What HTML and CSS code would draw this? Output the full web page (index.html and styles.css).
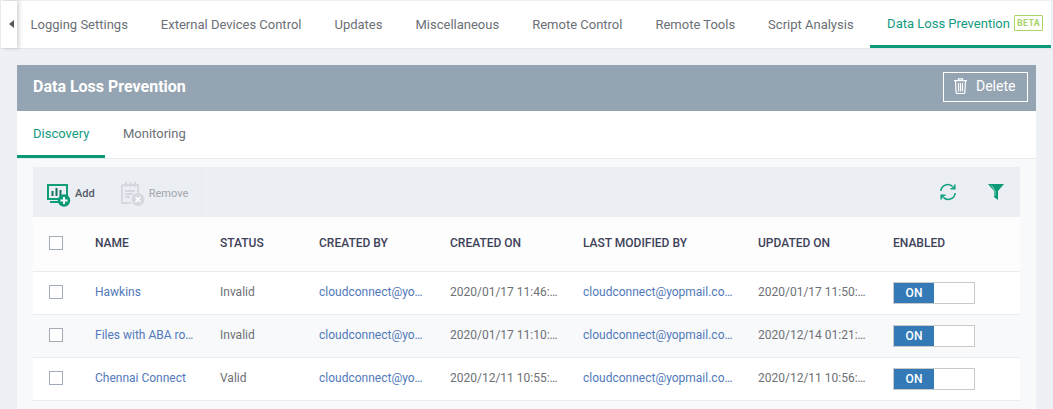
FILE: index.html
```html
<!DOCTYPE html>
<html lang="en">
<head>
<meta charset="utf-8">
<title>Data Loss Prevention</title>
<link rel="stylesheet" href="styles.css">
</head>
<body>
<div class="tabs">
  <div class="tabs-back"><span class="back-arrow"></span></div>
  <a class="tab">Logging Settings</a>
  <a class="tab">External Devices Control</a>
  <a class="tab">Updates</a>
  <a class="tab">Miscellaneous</a>
  <a class="tab">Remote Control</a>
  <a class="tab">Remote Tools</a>
  <a class="tab">Script Analysis</a>
  <a class="tab tab-active">Data Loss Prevention<span class="beta">BETA</span></a>
</div>
<main class="panel">
  <header class="panel-head">
    <h1 class="panel-title">Data Loss Prevention</h1>
    <button class="delete-btn">
      <svg class="trash" width="13" height="16" viewBox="0 0 13 16" fill="none" stroke="#fff" stroke-width="1.2"><path d="M0 2.600h13M4.500 2.600V.8h4v1.800M1.500 2.600l.6 11.600c0 .8.500 1.300 1.200 1.300h6.400c.7 0 1.200-.5 1.200-1.300l.6-11.600M4.500 5v8.500M6.500 5v8.500M8.500 5v8.500"/></svg>
      Delete
    </button>
  </header>
  <nav class="subtabs">
    <a class="subtab subtab-active">Discovery</a>
    <a class="subtab">Monitoring</a>
  </nav>
  <section class="content">
    <div class="toolbar">
      <button class="tool">
        <svg class="icon-add" width="24" height="23" viewBox="0 0 24 23" fill="none">
          <rect x="1" y="1" width="19" height="14" stroke="#0f9d7a" stroke-width="2"/>
          <path d="M5.500 12V7M9.500 12V4M13.500 12V6" stroke="#17735f" stroke-width="2"/>
          <path d="M3 18h10" stroke="#0f9d7a" stroke-width="2"/>
          <circle cx="17" cy="16.500" r="6.200" fill="#0a9a78"/>
          <path d="M13.500 16.500h7M17 13v7" stroke="#fff" stroke-width="2"/>
        </svg>
        <span>Add</span>
      </button>
      <button class="tool tool-off">
        <svg class="icon-remove" width="25" height="24" viewBox="0 0 25 24" fill="none">
          <path d="M2 3h16v9M2 3v18h9" stroke="#d5d8de" stroke-width="2"/>
          <path d="M6 0v5M10.500 0v5M15 0v5M5 9h10M5 12h8M5 15h5" stroke="#d5d8de" stroke-width="2"/>
          <circle cx="18" cy="17.500" r="6.500" fill="#d5d8de"/>
          <path d="M15.500 15l5 5M20.500 15l-5 5" stroke="#fff" stroke-width="1.600"/>
        </svg>
        <span>Remove</span>
      </button>
      <div class="tool-right">
        <svg class="refresh" width="18" height="18" viewBox="0 0 18 18" fill="none" stroke="#12a07e" stroke-width="1.500">
          <path d="M1.800 8a7 7 0 0 1 12.200-4l1.500 1.500M16.200 10a7 7 0 0 1-12.200 4l-1.500-1.500"/>
          <path d="M15.800 1.500v4.300H11.500M2.200 16.500v-4.300H6.500"/>
        </svg>
        <svg width="16" height="16" viewBox="0 0 16 16"><path d="M0 0h16l-6 7v9l-4-3V7z" fill="#0a9a78"/><path d="M3.500 1.500L7 7v5" fill="none" stroke="#8fd0bd" stroke-width="1"/></svg>
      </div>
    </div>
    <table class="grid">
      <colgroup>
        <col class="c-check"><col class="c-name"><col class="c-status"><col class="c-by"><col class="c-on"><col class="c-mod"><col class="c-upd"><col class="c-en">
      </colgroup>
      <thead>
        <tr>
          <th class="cell-check"><span class="check"></span></th>
          <th>NAME</th><th>STATUS</th><th>CREATED BY</th><th>CREATED ON</th><th>LAST MODIFIED BY</th><th>UPDATED ON</th><th>ENABLED</th>
        </tr>
      </thead>
      <tbody>
        <tr>
          <td class="cell-check"><span class="check"></span></td>
          <td><a class="link">Hawkins</a></td><td>Invalid</td>
          <td><a class="link">cloudconnect@yo…</a></td><td>2020/01/17 11:46:…</td>
          <td><a class="link">cloudconnect@yopmail.co…</a></td><td>2020/01/17 11:50:…</td>
          <td class="cell-switch"><span class="switch"><span class="switch-on">ON</span></span></td>
        </tr>
        <tr class="row-alt">
          <td class="cell-check"><span class="check"></span></td>
          <td><a class="link">Files with ABA ro…</a></td><td>Invalid</td>
          <td><a class="link">cloudconnect@yo…</a></td><td>2020/01/17 11:10:…</td>
          <td><a class="link">cloudconnect@yopmail.co…</a></td><td>2020/12/14 01:21:…</td>
          <td class="cell-switch"><span class="switch"><span class="switch-on">ON</span></span></td>
        </tr>
        <tr>
          <td class="cell-check"><span class="check"></span></td>
          <td><a class="link">Chennai Connect</a></td><td>Valid</td>
          <td><a class="link">cloudconnect@yo…</a></td><td>2020/12/11 10:55:…</td>
          <td><a class="link">cloudconnect@yopmail.co…</a></td><td>2020/12/11 10:56:…</td>
          <td class="cell-switch"><span class="switch"><span class="switch-on">ON</span></span></td>
        </tr>
      </tbody>
    </table>
  </section>
</main>
</body>
</html>
```
FILE: styles.css
```css
* { box-sizing: border-box; }
html, body { height: 100%; }
body {
  margin: 0;
  height: 409px;
  overflow: hidden;
  background: #edf1f5;
  font-family: Roboto, "Liberation Sans", sans-serif;
  font-size: 13px;
  color: #6b6f76;
  padding: 1px 2px 0 1px;
}
.tabs {
  display: flex;
  height: 48px;
  background: #fff;
  border-bottom: 1px solid #e3e7ec;
  font-size: 13px;
}
.tabs-back {
  flex: none;
  width: 16px;
  margin-right: -3px;
  display: flex;
  align-items: center;
  justify-content: center;
  box-shadow: 2px 0 4px rgba(0,0,0,.18);
  padding-bottom: 2px;
  padding-left: 4px;
}
.back-arrow {
  width: 0; height: 0;
  border-top: 4px solid transparent;
  border-bottom: 4px solid transparent;
  border-right: 5px solid #555;
}
.tab {
  flex: none;
  display: flex;
  align-items: center;
  padding: 0 16.500px 1px;
  height: 47px;
  white-space: nowrap;
}
.tab-active {
  color: #149a80;
  border-bottom: 3px solid #0a9a78;
  padding: 0 8px 0 17px;
}
.beta {
  display: inline-block;
  border: 1px solid #a8d468;
  color: #a8d468;
  font-size: 9px;
  font-weight: 700;
  letter-spacing: .3px;
  padding: 1px 2px;
  margin-left: 4px;
  line-height: 12px;
  border-radius: 1px;
}
.panel {
  margin: 16px 15px 0 16px;
  background: #f7f9fa;
  height: 344px;
}
.panel-head {
  display: flex;
  align-items: center;
  justify-content: space-between;
  height: 46px;
  background: #94a4b2;
  padding: 0 8px 0 16px;
}
.panel-title {
  margin: 0 0 3px;
  color: #fff;
  font-size: 16px;
  font-weight: 700;
}
.delete-btn {
  display: flex;
  align-items: center;
  gap: 9px;
  width: 85px;
  height: 30px;
  margin-bottom: 2px;
  background: transparent;
  border: 1px solid #fff;
  color: #fff;
  font: 14px Roboto, "Liberation Sans", sans-serif;
  padding: 0 0 2px 10px;
}
.subtabs {
  display: flex;
  height: 48px;
  background: #fff;
  border-bottom: 1px solid #e6e9ed;
}
.subtab {
  display: flex;
  align-items: center;
  padding: 0 16px 2px;
  margin-right: 2px;
  height: 47px;
}
.subtab-active {
  color: #149a80;
  border-bottom: 3px solid #0a9a78;
  padding-bottom: 0;
  width: 88px;
}
.content { padding: 8px 16px 0; }
.toolbar {
  display: flex;
  align-items: center;
  height: 50px;
  background: #ebeef3;
}
.tool {
  display: flex;
  align-items: center;
  gap: 4px;
  height: 50px;
  background: transparent;
  border: 0;
  border-right: 1px solid #e8ebf0;
  padding: 0 11px 0 14px;
  font: 500 11px Roboto, "Liberation Sans", sans-serif;
  color: #555a66;
}
.tool span { margin-top: 2px; }
.icon-add { margin-top: 6px; }
.icon-remove { margin-top: 4px; }
.tool-off { color: #a3a6ad; font-weight: 400; padding: 0 13px; }
.tool-right {
  margin-left: auto;
  display: flex;
  align-items: center;
  gap: 31px;
  padding-right: 16px;
}
.grid {
  width: 987px;
  border-collapse: collapse;
  table-layout: fixed;
  background: #fff;
}
.c-check { width: 62px; }
.c-name { width: 125px; }
.c-status { width: 99px; }
.c-by { width: 131px; }
.c-on { width: 133px; }
.c-mod { width: 175px; }
.c-upd { width: 135px; }
.c-en { width: 127px; }
thead tr { height: 54px; background: #fdfdfd; }
th {
  text-align: left;
  font-size: 12px;
  font-weight: 500;
  color: #3e4259;
  padding: 0 0 2px;
  border-bottom: 1px solid #e9ebee;
}
td {
  padding: 0 0 2px;
  height: 43px;
  font-size: 12px;
  color: #6e7075;
  border-bottom: 1px solid #e9ebee;
  white-space: nowrap;
}
.row-alt { background: #f8f9fb; }
.link { color: #5279ba; }
.cell-check { padding: 0 0 2px 16px; vertical-align: middle; }
.cell-switch { padding: 0; }
.check {
  display: block;
  width: 14px;
  height: 14px;
  background: #fff;
  border: 1px solid #a3aab8;
}
.switch {
  display: block;
  width: 82px;
  height: 22px;
  margin-top: 1px;
  background: #fff;
  border: 1px solid #c9c9c9;
}
.switch-on {
  display: block;
  width: 40px;
  height: 20px;
  background: #337ab7;
  color: #fff;
  font-size: 12px;
  font-weight: 500;
  line-height: 20px;
  text-align: center;
}
```
